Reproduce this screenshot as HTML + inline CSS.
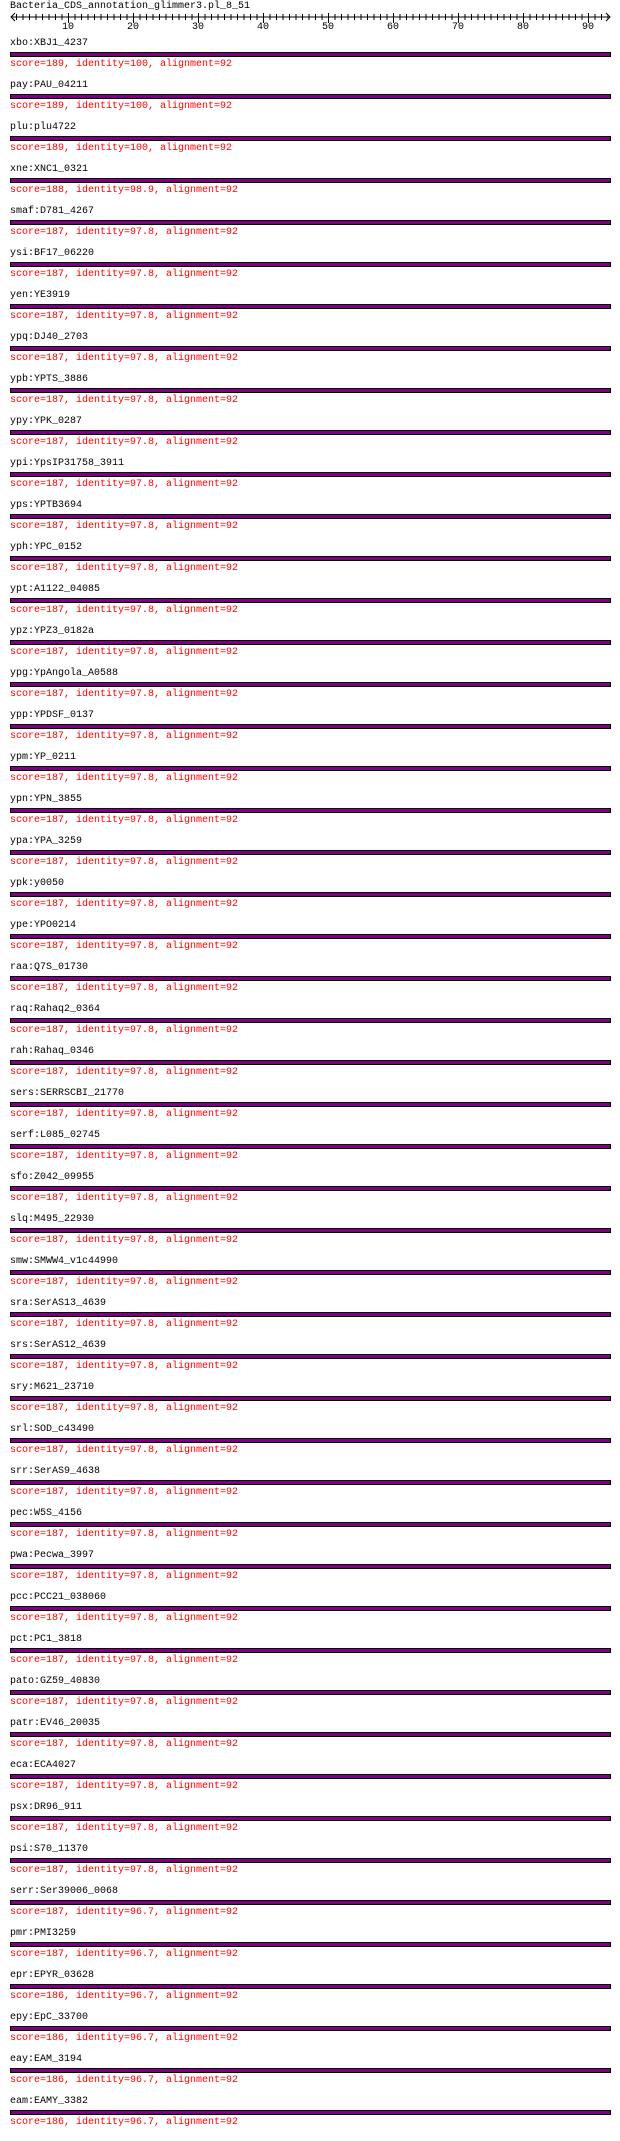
<!DOCTYPE html>
<html><head><meta charset="utf-8"><style>
html,body{margin:0;padding:0;background:#fff;width:620px;height:2141px;overflow:hidden}
body{position:relative;font-family:"Liberation Mono",monospace;font-size:10px;line-height:12px}
.t{position:absolute;left:10px;white-space:pre;color:#000}
.e{position:relative;height:42px}
.n{position:absolute;left:10px;top:0;white-space:pre}
.b{position:absolute;left:10px;top:14px;width:599px;height:3px;background:#800080;border:1px solid #000}
.s{position:absolute;left:10px;top:21px;white-space:pre;color:#f00}
#list{position:absolute;left:0;top:38px;width:620px}
.num{position:absolute;top:22px;font-size:10px}
</style></head><body>
<div class="t" style="top:1px">Bacteria_CDS_annotation_glimmer3.pl_8_51</div>
<svg style="position:absolute;left:0;top:0" width="620" height="36">
<line x1="11" y1="17" x2="610" y2="17" stroke="#000" stroke-width="1"/>
<line x1="16" y1="17" x2="608" y2="17" stroke="#000" stroke-width="6" stroke-dasharray="1 5.5"/>
<path d="M15,13l-4,4l4,4M606,13l4,4l-4,4" fill="none" stroke="#000"/>
<path d="M68.5,13v10M133.5,13v10M198.5,13v10M263.5,13v10M328.5,13v10M393.5,13v10M458.5,13v10M523.5,13v10M588.5,13v10" stroke="#000"/>
</svg>
<div class="num" style="left:62px">10</div><div class="num" style="left:127px">20</div><div class="num" style="left:192px">30</div><div class="num" style="left:257px">40</div><div class="num" style="left:322px">50</div><div class="num" style="left:387px">60</div><div class="num" style="left:452px">70</div><div class="num" style="left:517px">80</div><div class="num" style="left:582px">90</div>
<div id="list">
<div class="e"><div class="n">xbo:XBJ1_4237</div><div class="b"></div><div class="s">score=189, identity=100, alignment=92</div></div>
<div class="e"><div class="n">pay:PAU_04211</div><div class="b"></div><div class="s">score=189, identity=100, alignment=92</div></div>
<div class="e"><div class="n">plu:plu4722</div><div class="b"></div><div class="s">score=189, identity=100, alignment=92</div></div>
<div class="e"><div class="n">xne:XNC1_0321</div><div class="b"></div><div class="s">score=188, identity=98.9, alignment=92</div></div>
<div class="e"><div class="n">smaf:D781_4267</div><div class="b"></div><div class="s">score=187, identity=97.8, alignment=92</div></div>
<div class="e"><div class="n">ysi:BF17_06220</div><div class="b"></div><div class="s">score=187, identity=97.8, alignment=92</div></div>
<div class="e"><div class="n">yen:YE3919</div><div class="b"></div><div class="s">score=187, identity=97.8, alignment=92</div></div>
<div class="e"><div class="n">ypq:DJ40_2703</div><div class="b"></div><div class="s">score=187, identity=97.8, alignment=92</div></div>
<div class="e"><div class="n">ypb:YPTS_3886</div><div class="b"></div><div class="s">score=187, identity=97.8, alignment=92</div></div>
<div class="e"><div class="n">ypy:YPK_0287</div><div class="b"></div><div class="s">score=187, identity=97.8, alignment=92</div></div>
<div class="e"><div class="n">ypi:YpsIP31758_3911</div><div class="b"></div><div class="s">score=187, identity=97.8, alignment=92</div></div>
<div class="e"><div class="n">yps:YPTB3694</div><div class="b"></div><div class="s">score=187, identity=97.8, alignment=92</div></div>
<div class="e"><div class="n">yph:YPC_0152</div><div class="b"></div><div class="s">score=187, identity=97.8, alignment=92</div></div>
<div class="e"><div class="n">ypt:A1122_04085</div><div class="b"></div><div class="s">score=187, identity=97.8, alignment=92</div></div>
<div class="e"><div class="n">ypz:YPZ3_0182a</div><div class="b"></div><div class="s">score=187, identity=97.8, alignment=92</div></div>
<div class="e"><div class="n">ypg:YpAngola_A0588</div><div class="b"></div><div class="s">score=187, identity=97.8, alignment=92</div></div>
<div class="e"><div class="n">ypp:YPDSF_0137</div><div class="b"></div><div class="s">score=187, identity=97.8, alignment=92</div></div>
<div class="e"><div class="n">ypm:YP_0211</div><div class="b"></div><div class="s">score=187, identity=97.8, alignment=92</div></div>
<div class="e"><div class="n">ypn:YPN_3855</div><div class="b"></div><div class="s">score=187, identity=97.8, alignment=92</div></div>
<div class="e"><div class="n">ypa:YPA_3259</div><div class="b"></div><div class="s">score=187, identity=97.8, alignment=92</div></div>
<div class="e"><div class="n">ypk:y0050</div><div class="b"></div><div class="s">score=187, identity=97.8, alignment=92</div></div>
<div class="e"><div class="n">ype:YPO0214</div><div class="b"></div><div class="s">score=187, identity=97.8, alignment=92</div></div>
<div class="e"><div class="n">raa:Q7S_01730</div><div class="b"></div><div class="s">score=187, identity=97.8, alignment=92</div></div>
<div class="e"><div class="n">raq:Rahaq2_0364</div><div class="b"></div><div class="s">score=187, identity=97.8, alignment=92</div></div>
<div class="e"><div class="n">rah:Rahaq_0346</div><div class="b"></div><div class="s">score=187, identity=97.8, alignment=92</div></div>
<div class="e"><div class="n">sers:SERRSCBI_21770</div><div class="b"></div><div class="s">score=187, identity=97.8, alignment=92</div></div>
<div class="e"><div class="n">serf:L085_02745</div><div class="b"></div><div class="s">score=187, identity=97.8, alignment=92</div></div>
<div class="e"><div class="n">sfo:Z042_09955</div><div class="b"></div><div class="s">score=187, identity=97.8, alignment=92</div></div>
<div class="e"><div class="n">slq:M495_22930</div><div class="b"></div><div class="s">score=187, identity=97.8, alignment=92</div></div>
<div class="e"><div class="n">smw:SMWW4_v1c44990</div><div class="b"></div><div class="s">score=187, identity=97.8, alignment=92</div></div>
<div class="e"><div class="n">sra:SerAS13_4639</div><div class="b"></div><div class="s">score=187, identity=97.8, alignment=92</div></div>
<div class="e"><div class="n">srs:SerAS12_4639</div><div class="b"></div><div class="s">score=187, identity=97.8, alignment=92</div></div>
<div class="e"><div class="n">sry:M621_23710</div><div class="b"></div><div class="s">score=187, identity=97.8, alignment=92</div></div>
<div class="e"><div class="n">srl:SOD_c43490</div><div class="b"></div><div class="s">score=187, identity=97.8, alignment=92</div></div>
<div class="e"><div class="n">srr:SerAS9_4638</div><div class="b"></div><div class="s">score=187, identity=97.8, alignment=92</div></div>
<div class="e"><div class="n">pec:W5S_4156</div><div class="b"></div><div class="s">score=187, identity=97.8, alignment=92</div></div>
<div class="e"><div class="n">pwa:Pecwa_3997</div><div class="b"></div><div class="s">score=187, identity=97.8, alignment=92</div></div>
<div class="e"><div class="n">pcc:PCC21_038060</div><div class="b"></div><div class="s">score=187, identity=97.8, alignment=92</div></div>
<div class="e"><div class="n">pct:PC1_3818</div><div class="b"></div><div class="s">score=187, identity=97.8, alignment=92</div></div>
<div class="e"><div class="n">pato:GZ59_40830</div><div class="b"></div><div class="s">score=187, identity=97.8, alignment=92</div></div>
<div class="e"><div class="n">patr:EV46_20035</div><div class="b"></div><div class="s">score=187, identity=97.8, alignment=92</div></div>
<div class="e"><div class="n">eca:ECA4027</div><div class="b"></div><div class="s">score=187, identity=97.8, alignment=92</div></div>
<div class="e"><div class="n">psx:DR96_911</div><div class="b"></div><div class="s">score=187, identity=97.8, alignment=92</div></div>
<div class="e"><div class="n">psi:S70_11370</div><div class="b"></div><div class="s">score=187, identity=97.8, alignment=92</div></div>
<div class="e"><div class="n">serr:Ser39006_0068</div><div class="b"></div><div class="s">score=187, identity=96.7, alignment=92</div></div>
<div class="e"><div class="n">pmr:PMI3259</div><div class="b"></div><div class="s">score=187, identity=96.7, alignment=92</div></div>
<div class="e"><div class="n">epr:EPYR_03628</div><div class="b"></div><div class="s">score=186, identity=96.7, alignment=92</div></div>
<div class="e"><div class="n">epy:EpC_33700</div><div class="b"></div><div class="s">score=186, identity=96.7, alignment=92</div></div>
<div class="e"><div class="n">eay:EAM_3194</div><div class="b"></div><div class="s">score=186, identity=96.7, alignment=92</div></div>
<div class="e"><div class="n">eam:EAMY_3382</div><div class="b"></div><div class="s">score=186, identity=96.7, alignment=92</div></div>
</div>
</body></html>
